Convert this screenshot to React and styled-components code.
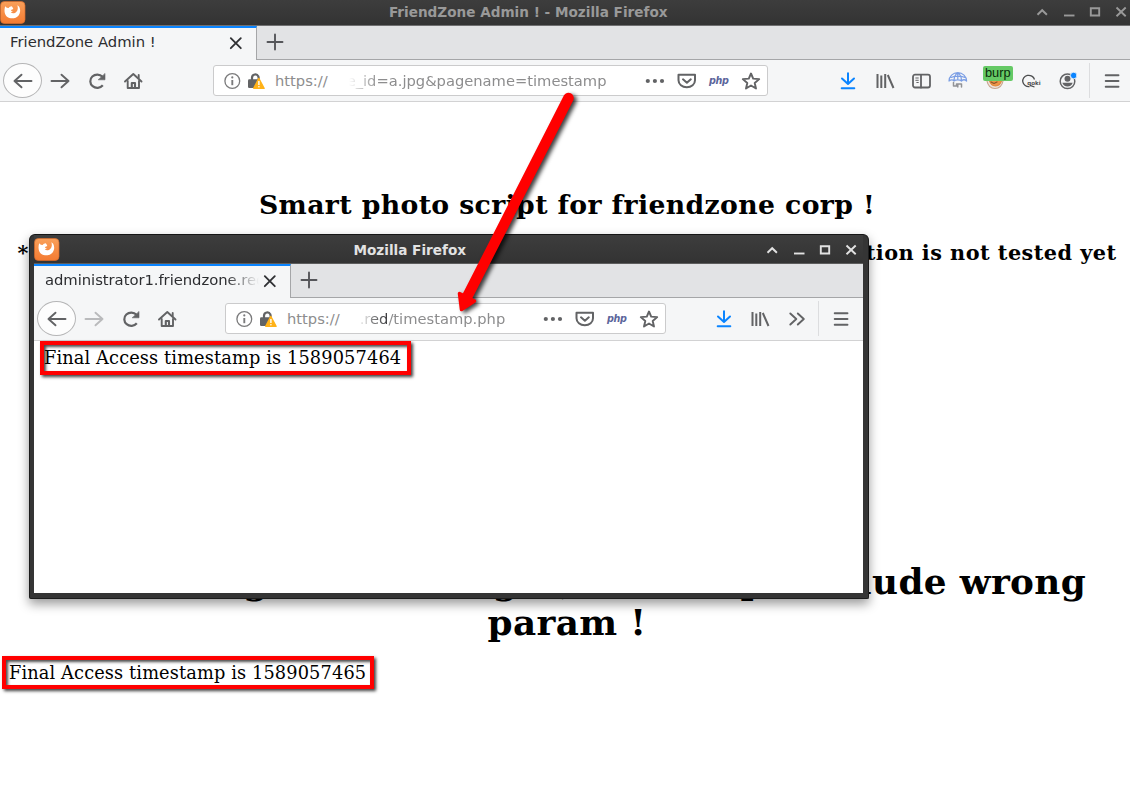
import React from 'react';
import styled, { createGlobalStyle, css } from 'styled-components';

const Global = createGlobalStyle`
  html, body { margin: 0; padding: 0; }
  body { width: 1130px; height: 812px; overflow: hidden; background: #fff; }
  * { box-sizing: border-box; }
`;

const sans = `'DejaVu Sans', 'Liberation Sans', sans-serif`;
const serif = `'DejaVu Serif', 'Liberation Serif', serif`;

const Desktop = styled.div`
  position: relative;
  width: 1130px;
  height: 812px;
  overflow: hidden;
  background: #fff;
`;

const BrowserWindow = styled.div`
  display: flex;
  flex-direction: column;
  height: 100%;
`;

const PopupWindow = styled.div`
  position: absolute;
  left: 29px;
  top: 234px;
  width: 840px;
  height: 365px;
  display: flex;
  flex-direction: column;
  border-radius: 6px 6px 2px 2px;
  background: #353535;
  border: 1px solid #1c1c1c;
  border-top-color: #151515;
  padding: 0 5px 5px 4px;
  box-shadow: 0 5px 11px rgba(0, 0, 0, 0.4);
`;

const TitleBar = styled.div`
  flex: none;
  display: flex;
  align-items: center;
  height: ${(p) => (p.$popup ? 28 : 25)}px;
  padding-top: ${(p) => (p.$popup ? 2 : 0)}px;
  padding-right: ${(p) => (p.$popup ? 4 : 1)}px;
  background: linear-gradient(#3d3d3d, #333);
  color: ${(p) => (p.$popup ? '#e2e2e2' : '#999')};
`;

const Title = styled.div`
  flex: 1;
  text-align: center;
  padding-right: ${(p) => p.$offset}px;
  padding-bottom: ${(p) => (p.$popup ? 1 : 2)}px;
  font: bold 13.6px/22px ${sans};
  white-space: nowrap;
`;

const WindowControls = styled.div`
  display: flex;
  gap: 10.2px;
  padding-bottom: ${(p) => (p.$popup ? 1 : 2)}px;
  svg { display: block; }
`;

const TabStrip = styled.div`
  flex: none;
  display: flex;
  height: 35px;
  background: #e2e3e5;
  border-bottom: 1px solid #a5a6a8;
  border-top: 1px solid ${(p) => (p.$popup ? '#5d5d5d' : '#6f6f70')};
`;

const Tab = styled.div`
  display: flex;
  align-items: center;
  width: ${(p) => p.$width}px;
  height: 34px;
  padding: 0 12px 2px ${(p) => p.$pad}px;
  border-top: 2px solid #0a84ff;
  border-right: 1px solid #a5a6a8;
  background: #f5f6f7;
`;

const TabLabel = styled.div`
  flex: 1;
  overflow: hidden;
  white-space: nowrap;
  padding-bottom: 2px;
  font: 14.8px/28px ${sans};
  color: #2c2d30;
  ${(p) => p.$fade && css`
    letter-spacing: -0.05px;
    mask-image: linear-gradient(to right, #000 calc(100% - 36px), transparent calc(100% - 3px));
  `}
`;

const NewTab = styled.div`
  display: flex;
  align-items: center;
  padding: 0 0 2px 8px;
`;

const Toolbar = styled.div`
  flex: none;
  display: flex;
  align-items: center;
  height: ${(p) => (p.$popup ? 43 : 42)}px;
  padding-bottom: ${(p) => (p.$popup ? 1 : 0)}px;
  background: #f5f6f7;
  border-bottom: 1px solid #d2d2d3;
`;

const NavButtons = styled.div`
  display: flex;
  align-items: center;
  width: ${(p) => p.$width}px;
  padding-left: 3px;
`;

const BackButton = styled.div`
  display: flex;
  align-items: center;
  justify-content: center;
  width: 39px;
  height: 35px;
  border: 1px solid #b5b5b6;
  border-radius: 50%;
  background: #fdfdfd;
`;

const NavItem = styled.div`
  display: flex;
  justify-content: center;
  width: 36.5px;
  opacity: ${(p) => (p.$dim ? 0.4 : 1)};
`;

const UrlBar = styled.div`
  display: flex;
  align-items: center;
  width: ${(p) => p.$width}px;
  height: 31px;
  padding-left: 9px;
  border: 1px solid #cbcbcc;
  border-radius: 3px;
  background: #fff;
`;

const LockSlot = styled.span`
  display: flex;
  margin-left: 6px;
`;

const UrlText = styled.div`
  display: flex;
  flex: 1;
  padding-left: 8px;
  font: 14.7px/28px ${sans};
  color: #8d8d8e;
  white-space: pre;
`;

const UrlRest = styled.span`
  margin-left: ${(p) => p.$gap}px;
  mask-image: linear-gradient(to right, transparent ${(p) => p.$fade - 10}px, rgba(0, 0, 0, 0.4) ${(p) => p.$fade}px, #000 32px);
`;

const UrlDomain = styled.span`
  color: #222326;
`;

const UrlActions = styled.div`
  display: flex;
  align-items: center;
  gap: 12px;
  padding-right: 6px;
`;

const PhpLabel = styled.span`
  width: 20px;
  font: italic bold 9.6px/18px ${sans};
  letter-spacing: -0.4px;
  color: #5c659b;
`;

const Actions = styled.div`
  display: flex;
  align-items: center;
  gap: 16.6px;
  margin-left: auto;
  svg { display: block; }
`;

const Burp = styled.div`
  position: relative;
  width: 20px;
  height: 20px;
`;

const BurpBadge = styled.span`
  position: absolute;
  left: -2px;
  top: -5px;
  width: 30px;
  height: 15px;
  border-radius: 2px;
  background: #65c965;
  color: #0c2b0c;
  text-align: center;
  font: 12.8px/13px 'Liberation Sans', sans-serif;
`;

const MenuButton = styled.div`
  display: flex;
  align-items: center;
  height: 35px;
  width: ${(p) => p.$width}px;
  margin-left: ${(p) => p.$gap}px;
  padding-left: 12px;
  border-left: 1px solid #dcdddf;
`;

const Page = styled.main`
  flex: 1;
  background: #fff;
  color: #000;
  font: 17.75px/21px ${serif};
  letter-spacing: 0.13px;
  padding: ${(p) => (p.$popup ? '3px 6px' : '87px 2px 0 6px')};
`;

const PageHeading = styled.div`
  text-align: center;
  white-space: nowrap;
  font-weight: bold;
  font-size: ${(p) => p.$size}px;
  line-height: ${(p) => p.$line}px;
  letter-spacing: ${(p) => p.$spacing}px;
  margin: ${(p) => p.$top || 0}px 0 0;
`;

const Marked = styled.div`
  width: ${(p) => p.$width}px;
  height: ${(p) => p.$height}px;
  margin-top: ${(p) => p.$top}px;
  margin-left: ${(p) => p.$left}px;
  padding-left: ${(p) => p.$pad}px;
  border: 4px solid #f00;
  line-height: ${(p) => p.$line}px;
  white-space: nowrap;
  box-shadow: 2px 2px 3px rgba(0, 0, 0, 0.75), inset 2px 2px 3px rgba(0, 0, 0, 0.7);
`;

const PointerArrow = styled.svg`
  position: absolute;
  left: 440px;
  top: 80px;
  overflow: visible;
  filter: drop-shadow(3px 2px 2px rgba(0, 0, 0, 0.75));
`;

const Icon = ({ size = 20, color = '#626365', w = 1.9, children }) => (
  <svg width={size} height={size} viewBox="0 0 20 20" fill="none" stroke={color} strokeWidth={w} strokeLinecap="round" strokeLinejoin="round">
    {children}
  </svg>
);

const FirefoxLogo = () => (
  <svg width="26" height="24" viewBox="0 0 26 24">
    <defs>
      <linearGradient id="fox" x1="0" y1="0" x2="0" y2="1">
        <stop offset="0" stopColor="#f9a05a" />
        <stop offset="1" stopColor="#f47b32" />
      </linearGradient>
    </defs>
    <rect x="0.5" y="0.5" width="24.5" height="22" rx="4" fill="url(#fox)" stroke="#d96c2b" strokeWidth="0.7" />
    <path d="M5.200 5.300 C4 9 4.300 13.200 7 15.700 C10.500 18.300 15.800 17.800 18.600 14.500 C20.700 11.500 20.500 8.500 19.300 6 C18.800 5 18.100 4.500 17.300 4.200 C18.200 6.500 18 9 16.400 10.800 C14.800 12.600 12.300 12.700 10.700 11.500 L13.300 10.600 C12.200 10.400 11.100 9.900 11 8.900 L13.300 7.900 L12.800 6.700 L11.800 5.200 C10.400 5.400 9.300 6.100 8.700 6.900 L6.800 6.800 Z" fill="#fff" />
  </svg>
);

const CloseIcon = () => <Icon size={16} color="#303134" w={2.3}><path d="M3.500 4 16 16.500 M16 4 3.500 16.500" /></Icon>;
const PlusIcon = () => <Icon color="#55565a" w={1.9}><path d="M10 2.500v15M2.500 10h15" /></Icon>;
const BackIcon = () => <Icon><path d="M18.500 10H1.500M8.500 3.700 1.500 10l7 6.300" /></Icon>;
const ForwardIcon = () => <Icon><path d="M1.500 10h17M11.500 3.700 18.500 10l-7 6.300" /></Icon>;
const ReloadIcon = () => (
  <Icon w={2.2}>
    <path d="M15.800 14.300A7 6.600 0 1 1 15.500 5.800" strokeLinecap="butt" />
    <path d="M18 2.800v6h-6.500z" fill="#626365" strokeWidth="0.6" />
  </Icon>
);
const HomeIcon = () => (
  <Icon>
    <path d="M2 10.500 10.300 3l8.200 7.500" />
    <path d="M4.700 10v7h11.300v-7" />
    <path d="M8.800 17v-5h3.200v5" strokeWidth="2.100" />
    <path d="M15.700 4v3" />
  </Icon>
);
const InfoIcon = () => (
  <svg width="18" height="18" viewBox="0 0 18 18" fill="none" stroke="#7b7b7c">
    <circle cx="9.300" cy="9" r="7.400" strokeWidth="1.300" />
    <path d="M9.300 8v5.200" strokeWidth="1.900" />
    <circle cx="9.300" cy="5.400" r="1.100" fill="#7b7b7c" stroke="none" />
  </svg>
);
const LockIcon = () => (
  <svg width="20" height="18" viewBox="0 0 20 18">
    <path d="M5 8V5.600a3.300 3.300 0 0 1 6.300-1.200c.5.900.4 2 .4 3.600" fill="none" stroke="#626365" strokeWidth="2.200" />
    <rect x="1" y="7.300" width="11" height="8.700" rx="1.300" fill="#626365" />
    <path d="M11.800 6.500 17 16.300H6.800z" fill="#ffb218" stroke="#ffb218" strokeWidth="1.600" strokeLinejoin="round" />
    <path d="M11.900 9v4" stroke="#fff" strokeWidth="1.400" />
    <circle cx="11.900" cy="14.800" r="0.800" fill="#fff" />
  </svg>
);
const DotsIcon = () => <Icon><g fill="#626365" stroke="none"><circle cx="2.800" cy="10" r="2.100" /><circle cx="9.900" cy="10" r="2.100" /><circle cx="17" cy="10" r="2.100" /></g></Icon>;
const PocketIcon = () => <Icon w={2}><path d="M1.500 3.800h16.500v5.500c0 4-3.500 7-8.200 7s-8.300-3-8.300-7z" /><path d="m6 8.300 3.900 3.500 3.900-3.500" /></Icon>;
const StarIcon = () => <Icon w={1.900}><path d="m10 2.500 2.200 5.100 6 .5-4.500 3.900 1.300 5.500-5-3-5 3 1.300-5.500L1.800 8.100l6-.5z" /></Icon>;
const DownloadIcon = () => <Icon color="#0a84ff" w={2}><path d="M10 2.300V12.500M4 7.500l6 5.500 6-5.500M3.700 17.300h12.600" /></Icon>;
const LibraryIcon = () => <Icon w={2}><path strokeLinecap="butt" d="M2.500 3v14M6.300 4.500V17M10.200 3v14M12.800 4 18.500 17" /></Icon>;
const SidebarIcon = () => <Icon w={1.800}><rect x="1" y="3.700" width="17" height="12.800" rx="2" /><path d="M9 4v12.500" /><path d="M3.800 7h2.500M3.800 9.300h2.500M4.800 11.500h1.500" strokeWidth="1" /></Icon>;
const ChevronsIcon = () => <Icon><path d="m3.300 4.500 6 5.500-6 5.500M10.800 4.500l6 5.500-6 5.500" /></Icon>;
const MenuIcon = () => <Icon w={1.900}><path d="M3.700 4.300h12.800M3.700 10h12.800M3.700 15.700h12.800" /></Icon>;
const GlobeIcon = () => (
  <Icon color="#7c9fe5" w={1.200}>
    <path d="M1 10a8.800 8.300 0 0 1 17.600 0M1 10c2-1.500 4-1.500 5 0 1.500-1.500 6-1.500 7.500 0 1.500-1.500 3.500-1.500 5 0M6 10C6 6 7.800 3 9.800 2c2 1 3.700 4 3.700 8M3 6.500c4-1.500 10-1.500 14 0M9.800 2v7" />
    <path d="M5.500 11.500v3.500h3v-2h5v3M9.800 13.500v2.500" stroke="#929396" strokeWidth="1.500" />
  </Icon>
);
const FoxyIcon = () => (
  <Icon w={1.200} color="#c9a58d">
    <path d="M2 10c1 5 4 7.500 8 7.500s7-2.500 8-7.500" fill="#ece3de" />
    <path d="M4 8c1 5 3.500 7 6.500 7S16 13 17 8z" fill="#ed9548" stroke="#e08a3c" />
    <path d="m6 11 3 1.500 3-1.500" stroke="#8b5329" />
  </Icon>
);
const CookieText = styled.text`
  font: bold 5.5px ${sans};
  fill: #4b4c4e;
`;
const CookieIcon = () => (
  <svg width="20" height="20" viewBox="0 0 20 20" fill="none" stroke="#4b4c4e" strokeWidth="1.300" overflow="visible">
    <path d="M8.500 15.500A6 5.600 0 1 1 13.500 8.500M9 14.300l4.500 1.700" />
    <CookieText x="6.300" y="14" stroke="none">qoki</CookieText>
  </svg>
);
const AccountIcon = () => (
  <Icon w={1.500}>
    <circle cx="9.500" cy="10.300" r="7.300" />
    <circle cx="9.500" cy="7.800" r="3" fill="#626365" stroke="none" />
    <path d="M4.300 11.800h10.400c-.5 2.200-2.700 3.700-5.200 3.700s-4.700-1.500-5.200-3.700z" fill="#626365" stroke="none" />
    <circle cx="15.700" cy="4.500" r="3.300" fill="#0a84ff" stroke="#f5f6f7" strokeWidth="0.800" />
  </Icon>
);

const controlShapes = ['M3.500 10.800 8.200 6.200l4.700 4.600', 'M3 11.500h10.500', 'M3.800 4.300h8.400v7.200H3.800z', 'M3.500 3.500 12.700 12.300 M12.700 3.500 3.500 12.300'];

const Controls = ({ popup }) => (
  <WindowControls $popup={popup}>
    {controlShapes.map((d) => (
      <svg key={d} width="16" height="16" viewBox="0 0 16 16" fill="none" stroke="currentColor" strokeWidth="1.900"><path d={d} /></svg>
    ))}
  </WindowControls>
);

const Chrome = ({ popup, title, offset, tab, tabWidth, navWidth, urlWidth, url, children, menuGap, menuWidth }) => (
  <>
    <TitleBar $popup={popup}>
      <FirefoxLogo />
      <Title $popup={popup} $offset={offset}>{title}</Title>
      <Controls popup={popup} />
    </TitleBar>
    <TabStrip $popup={popup}>
      <Tab $width={tabWidth} $pad={popup ? 11 : 10}>
        <TabLabel $fade={popup}>{tab}</TabLabel>
        <CloseIcon />
      </Tab>
      <NewTab><PlusIcon /></NewTab>
    </TabStrip>
    <Toolbar $popup={popup}>
      <NavButtons $width={navWidth}>
        <BackButton><BackIcon /></BackButton>
        <NavItem $dim={popup}><ForwardIcon /></NavItem>
        <NavItem><ReloadIcon /></NavItem>
        <NavItem><HomeIcon /></NavItem>
      </NavButtons>
      <UrlBar $width={urlWidth}>
        <InfoIcon />
        <LockSlot><LockIcon /></LockSlot>
        <UrlText>{url}</UrlText>
        <UrlActions>
          <DotsIcon />
          <PocketIcon />
          <PhpLabel>php</PhpLabel>
          <StarIcon />
        </UrlActions>
      </UrlBar>
      <Actions>{children}</Actions>
      <MenuButton $gap={menuGap} $width={menuWidth}><MenuIcon /></MenuButton>
    </Toolbar>
  </>
);

export default function App() {
  return (
    <>
      <Global />
      <Desktop>
        <BrowserWindow>
          <Chrome
            title="FriendZone Admin ! - Mozilla Firefox"
            offset={4}
            tab="FriendZone Admin !"
            tabWidth={257}
            navWidth={213}
            urlWidth={555}
            menuGap={11}
            menuWidth={41}
            url={<>https://<UrlRest $gap={19} $fade={12}>e_id=a.jpg&amp;pagename=timestamp</UrlRest></>}
          >
            <DownloadIcon />
            <LibraryIcon />
            <SidebarIcon />
            <GlobeIcon />
            <Burp><FoxyIcon /><BurpBadge>burp</BurpBadge></Burp>
            <CookieIcon />
            <AccountIcon />
          </Chrome>
          <Page>
            <PageHeading as="h2" $size={26.7} $line={31} $spacing={0.37}>Smart photo script for friendzone corp !</PageHeading>
            <PageHeading as="h3" $size={20.8} $line={24} $top={21} $spacing={0.47}>* Note : we are dealing with a beginner php developer and the application is not tested yet</PageHeading>
            <PageHeading as="h1" $size={35.8} $line={41} $top={296} $spacing={0.35}>Something went worng ! , the script include wrong<br />param !</PageHeading>
            <Marked $width={372} $height={33} $line={27} $top={13} $left={-4} $pad={3}>Final Access timestamp is 1589057465</Marked>
          </Page>
        </BrowserWindow>
        <PopupWindow>
          <Chrome
            popup
            title="Mozilla Firefox"
            offset={5}
            tab="administrator1.friendzone.red"
            tabWidth={257}
            navWidth={191}
            urlWidth={441}
            menuGap={11}
            menuWidth={45}
            url={<>https://<UrlRest $gap={20} $fade={5}>.r<UrlDomain>ed</UrlDomain>/timestamp.php</UrlRest></>}
          >
            <DownloadIcon />
            <LibraryIcon />
            <ChevronsIcon />
          </Chrome>
          <Page $popup>
            <Marked $width={371} $height={34} $line={27} $top={-3} $left={0} $pad={0}>Final Access timestamp is 1589057464</Marked>
          </Page>
        </PopupWindow>
        <PointerArrow width="140" height="240" viewBox="440 80 140 240">
          <path d="M568.500 98 466 299" stroke="#f00" strokeWidth="10.500" strokeLinecap="round" />
          <path d="M459.500 293.500 461.500 309.500 474.500 301z" fill="#f00" stroke="#f00" strokeWidth="3.500" strokeLinejoin="round" />
        </PointerArrow>
      </Desktop>
    </>
  );
}
